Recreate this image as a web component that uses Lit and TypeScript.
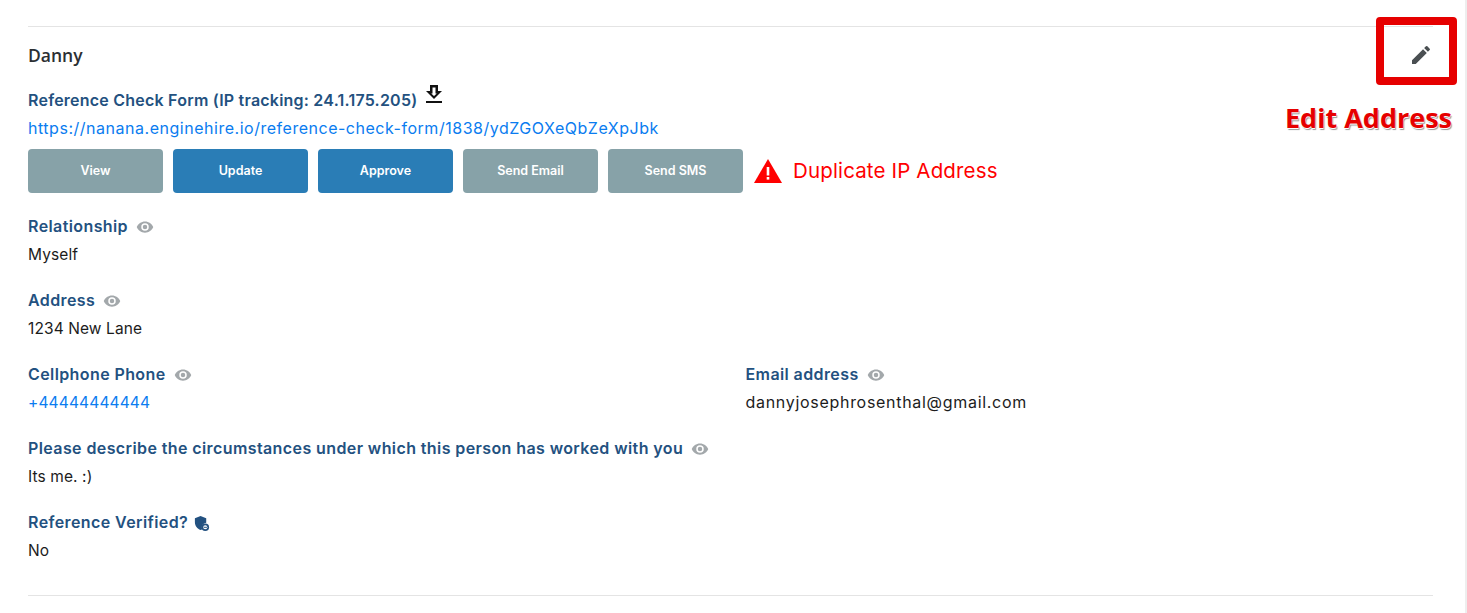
import { LitElement, html, css, svg } from 'lit';
import { customElement } from 'lit/decorators.js';

const eye = html`<svg class="eye" viewBox="0 0 24 24"><path d="M12 4.500C7 4.500 2.700 7.600 1 12c1.700 4.400 6 7.500 11 7.500s9.300-3.100 11-7.500c-1.700-4.400-6-7.500-11-7.500zM12 17a5 5 0 1 1 0-10 5 5 0 0 1 0 10zm0-8a3 3 0 1 0 0 6 3 3 0 0 0 0-6z"/></svg>`;

const shield = svg`<path d="M8 1 2 3.400v4.400c0 3.700 2.600 7.100 6 8 .6-.15 1.100-.4 1.700-.7A5 5 0 0 1 14 8.100V3.400z"/><circle cx="13" cy="13" r="4"/><circle cx="13" cy="13" r="2.200" fill="#fff"/><rect x="11.200" y="12.500" width="3.600" height="1" />`;

@customElement('app-root')
export class AppRoot extends LitElement {
  static styles = css`
    :host {
      display: block;
      height: 613px;
      overflow: hidden;
      background: #fff;
      font-family: Inter, 'Open Sans', sans-serif;
      font-size: 15.5px;
      color: #1c1c1c;
      position: relative;
    }
    .page {
      margin-right: 34px;
      padding: 26px 0 0 28px;
      box-sizing: border-box;
    }
    .section {
      border-top: 1px solid #e4e4e4;
      border-bottom: 1px solid #e4e4e4;
      height: 570px;
      box-sizing: border-box;
      padding-top: 17px;
    }
    .name {
      font-family: 'Open Sans', sans-serif;
      font-size: 17.5px;
      font-weight: 600;
      line-height: 22px;
      color: #2b2f33;
      margin-bottom: 23px;
    }
    .label {
      display: flex;
      align-items: center;
      font-weight: 600;
      color: #235180;
      line-height: 22px;
      font-size: 16px;
      letter-spacing: 0.4px;
    }
    .form-title { gap: 9px; letter-spacing: 0.22px; }
    .form-title svg { width: 16px; height: 18px; fill: #111; margin-top: -12px; }
    a { color: #0a7cf0; text-decoration: none; }
    .url { display: block; line-height: 24px; margin-top: 5px; font-size: 16px; letter-spacing: 0.52px; }
    .buttons { display: flex; align-items: center; gap: 10px; margin-top: 9px; margin-bottom: 22px; }
    button {
      width: 135px;
      height: 44px;
      border: 0;
      border-radius: 4px;
      padding: 0 0 2px;
      font: 600 12.5px Inter, sans-serif;
      color: #fff;
      background: #87a2a8;
    }
    button.primary { background: #2a7db6; }
    .warn {
      display: flex;
      align-items: center;
      gap: 11px;
      color: #f00;
      font-size: 20.5px;
      letter-spacing: 0.15px;
      margin-left: 1px;
    }
    .warn svg { width: 28px; height: 26px; }
    .warn span { margin-top: -2px; }
    .field { margin-bottom: 22px; }
    .field .label { gap: 8px; }
    .eye { width: 18px; height: 18px; fill: #a3a8ab; margin-top: 2px; }
    .shield { width: 17px; height: 17px; fill: #235180; margin: 2px 0 0 -3px; }
    .value { line-height: 24px; margin-top: 6px; letter-spacing: 0.1px; }
    .value a { letter-spacing: 0.15px; }
    .email { display: block; font-size: 16px; line-height: 22px; letter-spacing: 0.7px; }
    .cols { display: grid; grid-template-columns: 717.5px 1fr; }
    .callout {
      position: absolute;
      top: 17px;
      left: 1376px;
      width: 81px;
      height: 68px;
      box-sizing: border-box;
      border: 8px solid #e60000;
      border-radius: 4px;
      display: flex;
      align-items: center;
      justify-content: flex-end;
      padding: 8px 16px 0 0;
    }
    .callout svg { width: 24px; height: 24px; fill: #4a4f52; }
    .callout-text {
      position: absolute;
      top: 98px;
      left: 1285px;
      font-family: 'Open Sans', sans-serif;
      font-weight: 700;
      font-size: 27px;
      line-height: 40px;
      color: #e60000;
      white-space: nowrap;
      text-shadow: 0 1px 0 #fff, 1px 2px 1px #999;
    }
    .scrollbar {
      position: absolute;
      top: 0;
      right: 0;
      bottom: 0;
      width: 2px;
      background: #eee;
    }
  `;

  private field(label: string, value: unknown, icon: unknown = eye) {
    return html`<div class="field">
      <div class="label">${label}${icon}</div>
      <div class="value">${value}</div>
    </div>`;
  }

  render() {
    return html`
      <div class="page">
        <div class="section">
          <div class="name">Danny</div>
          <div class="label form-title">
            Reference Check Form (IP tracking: 24.1.175.205)
            <svg viewBox="0 0 16 18"><path fill-rule="evenodd" d="M4 0h8v6h4l-8 8-8-8h4zM6.500 2.500v6H5.200L8 11l2.800-2.500H9.500v-6z"/><rect x="0" y="16" width="16" height="2"/></svg>
          </div>
          <a class="url" href="#">https://nanana.enginehire.io/reference-check-form/1838/ydZGOXeQbZeXpJbk</a>
          <div class="buttons">
            <button>View</button>
            <button class="primary">Update</button>
            <button class="primary">Approve</button>
            <button>Send Email</button>
            <button>Send SMS</button>
            <div class="warn">
              <svg viewBox="0 0 28 26"><path fill="#f00" d="M14 1 28 25H0z"/><rect x="12.700" y="9" width="2.600" height="8.500" fill="#fff"/><rect x="12.700" y="19" width="2.600" height="2.600" fill="#fff"/></svg>
              <span>Duplicate IP Address</span>
            </div>
          </div>
          ${this.field('Relationship', 'Myself')}
          ${this.field('Address', '1234 New Lane')}
          <div class="cols">
            ${this.field('Cellphone Phone', html`<a href="#">+44444444444</a>`)}
            ${this.field('Email address', html`<span class="email">dannyjosephrosenthal@gmail.com</span>`)}
          </div>
          ${this.field('Please describe the circumstances under which this person has worked with you', 'Its me. :)')}
          ${this.field('Reference Verified?', 'No', html`<svg class="shield" viewBox="0 0 18 18">${shield}</svg>`)}
        </div>
      </div>
      <div class="callout">
        <svg viewBox="0 0 24 24"><path d="M3 17.250V21h3.750L17.810 9.940l-3.750-3.750L3 17.250zM20.710 7.040a1 1 0 0 0 0-1.410l-2.340-2.340a1 1 0 0 0-1.410 0l-1.830 1.830 3.750 3.750 1.830-1.830z"/></svg>
      </div>
      <div class="callout-text">Edit Address</div>
      <div class="scrollbar"></div>
    `;
  }
}
